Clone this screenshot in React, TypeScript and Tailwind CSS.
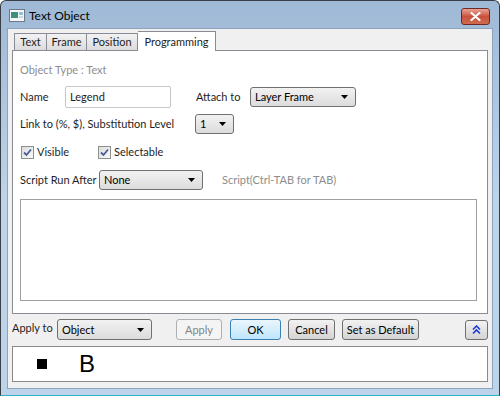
import React from "react"

const font = { fontFamily: 'Lato, "Noto Sans", sans-serif' }

function Arrow() {
    return (
        <svg width="7" height="4" viewBox="0 0 7 4" className="shrink-0">
            <path d="M0 0 H7 L3.5 4 Z" fill="#000" />
        </svg>
    )
}

function Combo({ value, className }: { value: string; className: string }) {
    return (
        <div
            className={`shrink-0 flex items-center justify-between pl-[4px] pr-[7px] border border-[#707070] rounded-[3px] bg-gradient-to-b from-[#f2f2f2] to-[#dcdcdc] text-black ${className}`}
        >
            <span>{value}</span>
            <Arrow />
        </div>
    )
}

function CheckBox({ label }: { label: string }) {
    return (
        <div className="flex items-center gap-[3px]">
            <div className="w-[13px] h-[13px] border border-[#8e8f8f] bg-gradient-to-br from-[#dcdcdc] to-[#fafafa] flex items-center justify-center">
                <svg width="9" height="9" viewBox="0 0 9 9">
                    <path d="M1 4.5 L3.5 7 L8 1.5" fill="none" stroke="#4a5f97" strokeWidth="1.8" />
                </svg>
            </div>
            <span>{label}</span>
        </div>
    )
}

function Button({ label, className }: { label: string; className: string }) {
    return (
        <div
            className={`shrink-0 h-[21px] flex items-center justify-center rounded-[3px] border ${className}`}
        >
            {label}
        </div>
    )
}

export default function App() {
    return (
        <div
            className="w-[500px] h-[396px] flex flex-col bg-gradient-to-b from-[#9fb9d6] via-[#bcd3ea] to-[#bcd3ea] border border-[#3a3f47] border-b-[#2fb4c8] rounded-t-[6px] overflow-hidden text-[11px] leading-[14px] text-[#1e1e1e] whitespace-nowrap"
            style={font}
        >
            {/* title bar */}
            <div className="h-[27px] flex items-center pl-[8px] pr-[9px] shrink-0">
                <svg width="16" height="13" viewBox="0 0 16 13" className="mt-[2px]">
                    <rect x="0.5" y="0.5" width="15" height="12" fill="#f4f6f8" stroke="#6b7a86" />
                    <rect x="2" y="3" width="7" height="6" fill="#3f8f7a" />
                    <rect x="10" y="3" width="4" height="3" fill="#8fc0d6" />
                    <rect x="10" y="7" width="4" height="2" fill="#c8d8e0" />
                </svg>
                <span className="ml-[4px] mt-[2px] text-[12px] text-black">Text Object</span>
                <div className="ml-auto mt-[3px] w-[29px] h-[17px] rounded-[3px] border border-[#6e2a22] bg-gradient-to-b from-[#e8a494] via-[#c8513c] to-[#cf6b4f] flex items-center justify-center">
                    <svg width="11" height="9" viewBox="0 0 11 9">
                        <path d="M1.5 1 L9.5 8 M9.5 1 L1.5 8" stroke="#fff" strokeWidth="2.2" strokeLinecap="round" />
                    </svg>
                </div>
            </div>

            {/* client area */}
            <div className="mx-[6px] mb-[6px] flex-1 bg-[#f0f0f0] border border-[#8da2bc] flex flex-col pl-[4px] pr-[4px] pt-[2px]">
                {/* tabs */}
                <div className="flex items-end h-[19px] pl-[2px] relative z-10">
                    <div className="w-[33px] h-[17px] flex items-center justify-center border border-[#898c95] border-b-0 bg-gradient-to-b from-[#f2f2f2] to-[#dcdcdc]">Text</div>
                    <div className="w-[40px] h-[17px] flex items-center justify-center border border-[#898c95] border-b-0 border-l-0 bg-gradient-to-b from-[#f2f2f2] to-[#dcdcdc]">Frame</div>
                    <div className="w-[51px] h-[17px] flex items-center justify-center border border-[#898c95] border-b-0 border-l-0 bg-gradient-to-b from-[#f2f2f2] to-[#dcdcdc]">Position</div>
                    <div className="w-[78px] h-[20px] -mb-[1px] flex items-center justify-center border border-[#898c95] border-b-0 border-l-0 bg-white">Programming</div>
                </div>

                {/* tab panel */}
                <div className="h-[264px] shrink-0 bg-white border border-[#898c95] flex flex-col pl-[7px] pr-[10px]">
                    <div className="mt-[12px] text-[#8d8d8d]">Object Type : Text</div>

                    <div className="mt-[9px] flex items-center">
                        <span className="w-[45px] shrink-0">Name</span>
                        <div className="shrink-0 w-[106px] h-[22px] border border-[#c4c7cc] rounded-[2px] pl-[4px] flex items-center">Legend</div>
                        <span className="ml-[25px] w-[54px] shrink-0">Attach to</span>
                        <Combo value="Layer Frame" className="w-[106px] h-[20px]" />
                    </div>

                    <div className="mt-[6px] flex items-center">
                        <span className="w-[175px] shrink-0">Link to (%, $), Substitution Level</span>
                        <Combo value="1" className="w-[39px] h-[20px]" />
                    </div>

                    <div className="mt-[11px] flex items-center">
                        <div className="w-[78px] pl-[1px]"><CheckBox label="Visible" /></div>
                        <CheckBox label="Selectable" />
                    </div>

                    <div className="mt-[11px] flex items-center">
                        <span className="w-[79px] shrink-0">Script Run After</span>
                        <Combo value="None" className="w-[104px] h-[20px]" />
                        <span className="ml-[19px] text-[#8d8d8d]">Script(Ctrl-TAB for TAB)</span>
                    </div>

                    <div className="mt-[9px] h-[102px] border border-[#a0a0a0]" />
                </div>

                {/* bottom controls */}
                <div className="mt-[5px] flex items-center h-[21px]">
                    <span className="w-[45px] shrink-0 -mt-[4px]">Apply to</span>
                    <Combo value="Object" className="w-[95px] h-[21px]" />
                    <Button label="Apply" className="ml-[24px] w-[46px] border-[#adb2b5] bg-[#f4f4f4] text-[#838383]" />
                    <Button label="OK" className="ml-[8px] w-[51px] border-[#3c7fb1] bg-gradient-to-b from-[#eaf6fd] to-[#bee6fd] text-black" />
                    <Button label="Cancel" className="ml-[7px] w-[47px] border-[#707070] bg-gradient-to-b from-[#f2f2f2] to-[#d4d4d4] text-black" />
                    <Button label="Set as Default" className="ml-[7px] w-[77px] border-[#707070] bg-gradient-to-b from-[#f2f2f2] to-[#d4d4d4] text-black" />
                    <div className="ml-auto w-[23px] h-[20px] rounded-[3px] border border-[#707070] bg-gradient-to-b from-[#f2f2f2] to-[#d4d4d4] flex items-center justify-center">
                        <svg width="9" height="10" viewBox="0 0 9 10">
                            <path d="M1 4.5 L4.5 1 L8 4.5 M1 8.5 L4.5 5 L8 8.5" fill="none" stroke="#1c3bd8" strokeWidth="1.6" />
                        </svg>
                    </div>
                </div>

                {/* preview */}
                <div className="mt-[6px] h-[36px] bg-white border border-[#8a8a8a] flex items-center">
                    <div className="ml-[24px] w-[10px] h-[10px] bg-black" />
                    <span className="ml-[32px] text-[24px] leading-none text-black" style={{ fontFamily: '"Liberation Sans", Arial, sans-serif' }}>B</span>
                </div>
            </div>
        </div>
    )
}
